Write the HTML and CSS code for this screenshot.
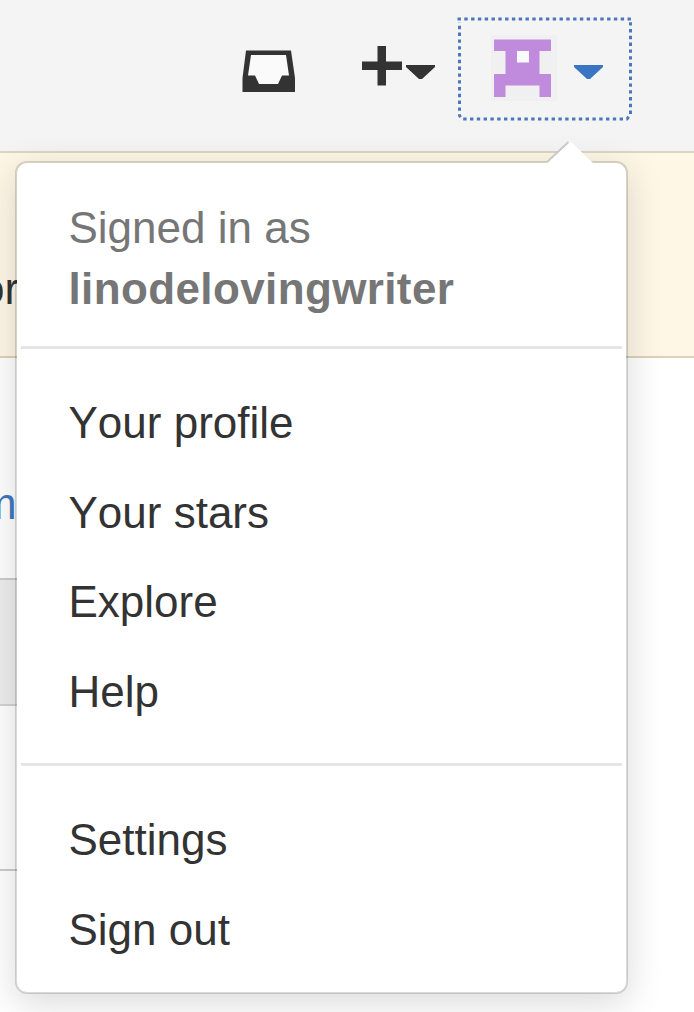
FILE: index.html
```html
<!DOCTYPE html>
<html lang="en">
<head>
<meta charset="utf-8">
<title>Account menu</title>
<link rel="stylesheet" href="styles.css">
</head>
<body>
<div class="page">
  <header class="topbar">
    <svg class="inbox" width="54" height="44" viewBox="0 0 54 44"><path fill="#fafafa" d="M8 4h36l4 22-6 12H12L6 26z"/><path fill="#333" fill-rule="evenodd" d="M4 0.500h45L53 28v14H0.500V28zM9 5L6 25.500h7l4 8.500h19l4-8.500h7L44 5z"/></svg>
    <svg class="create" width="74" height="42" viewBox="0 0 74 42"><path fill="#333" d="M15.500 1h8.500v15.500h16V25H24v15.500h-8.500V25H0v-8.500h15.500zM44 20h29v2L60 34h-3L44 22z"/></svg>
    <div class="account">
      <svg class="focus" width="176" height="104" viewBox="0 0 176 104"><path d="M.5 2H175M173.500 5.200V97.500L170 102H5L2.500 98.500V5.200" /></svg>
      <svg class="avatar" width="66" height="66" viewBox="0 0 66 66"><path fill="#f0f0f0" d="M0 0h66v66H0z"/><path fill="#c08bdc" d="M3 4.500h57V16H48.500v23H60v23H48.500V50.500h-34V62H3V39h11.500V16H3z"/><path fill="#fafafa" d="M26 16h12v11.500H26z"/></svg>
      <svg class="caret" width="29" height="15" viewBox="0 0 29 15"><path fill="#3a75c4" d="M0 0h29v2L16 14h-3L0 2z"/></svg>
    </div>
  </header>
  <section class="banner">or</section>
  <main class="content">
    <div class="links">m</div>
    <div class="shaded"></div>
    <div class="row"></div>
    <div class="rest"></div>
  </main>
  <nav class="menu">
    <svg class="pointer" width="50" height="26" viewBox="0 0 50 26"><path fill="#fff" d="M1 26V24L25 1l24 23v2z"/><path fill="none" stroke="#c9c9c9" stroke-width="2" d="M2 22L23.500 2"/></svg>
    <div class="signed">Signed in as<strong>linodelovingwriter</strong></div>
    <hr>
    <div class="group primary"><a>Your profile</a><a>Your stars</a><a>Explore</a><a>Help</a></div>
    <hr>
    <div class="group secondary"><a>Settings</a><a>Sign out</a></div>
  </nav>
</div>
</body>
</html>
```
FILE: styles.css
```css
* { box-sizing: border-box; }
body { margin: 0; font-family: "Liberation Sans", Arial, sans-serif; font-size: 44px; font-kerning: none; color: #333; background: #fff; }
svg { display: block; flex: none; }
.page { position: relative; width: 694px; height: 1012px; overflow: hidden; }
.topbar { height: 153px; background: #f4f4f4; border-bottom: 2px solid #ddd4c3; display: flex; align-items: flex-start; padding-left: 242px; }
.inbox { margin-top: 50px; }
.create { margin: 45px 0 0 66px; }
.account { position: relative; display: flex; width: 176px; height: 104px; margin: 17px 0 0 21px; padding: 18px 0 0 34px; }
.focus { position: absolute; left: 0; top: 0; fill: none; stroke: #4b78bd; stroke-width: 3; stroke-dasharray: 3.4 3.4; }
.caret { margin: 30px 0 0 17px; }
.banner { height: 205px; padding-top: 111px; background: #fff7e6; border-bottom: 2px solid #ddd2b8; line-height: 50px; white-space: nowrap; text-indent: -20px; }
.links { height: 222px; padding-top: 121px; border-bottom: 2px solid #ccc; color: #4078c0; line-height: 50px; text-indent: -20px; }
.shaded { height: 126px; background: #eee; border-bottom: 2px solid #d3d3d3; }
.row { height: 165px; border-bottom: 2px solid #ccc; }
.links, .shaded, .row { width: 200px; }
.menu { position: absolute; left: 15px; top: 161px; width: 613px; height: 833px; padding: 34px 4px 0; background: #fff; border: 2px solid rgba(0,0,0,.15); background-clip: padding-box; border-radius: 12px; box-shadow: 0 9px 36px rgba(0,0,0,.15); }
.pointer { position: absolute; left: 528px; top: -23px; }
.signed { height: 148px; padding-left: 47.5px; color: #767676; line-height: 61px; }
.signed strong { display: block; letter-spacing: .38px; }
.menu hr { height: 3px; margin: 1px 0 0; border: 0; background: #e5e5e5; }
.group { padding-left: 47.5px; }
.group a { display: block; height: 89.500px; line-height: 89.500px; }
.primary { height: 413px; padding-top: 29px; }
.secondary { padding-top: 29px; }
```
